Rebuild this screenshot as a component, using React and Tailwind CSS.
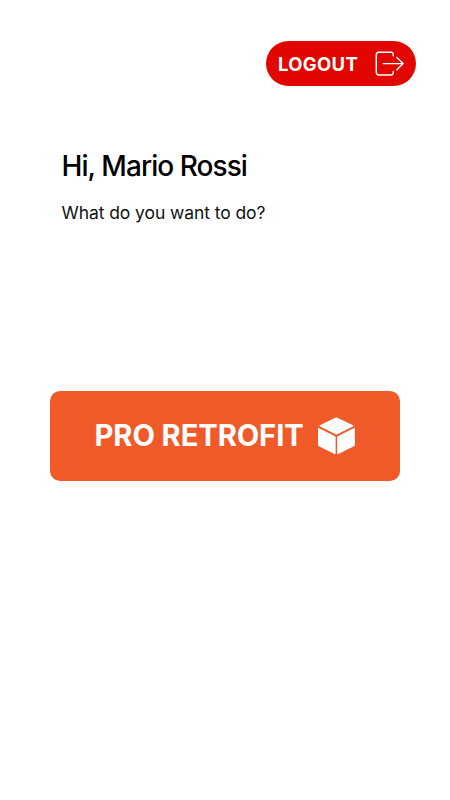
function LogoutIcon() {
  return (
    <svg className="h-[26px] w-[30px] shrink-0" viewBox="0 0 30 26" fill="none" stroke="#fff" strokeWidth="1.45" strokeLinecap="round" strokeLinejoin="round">
      <path d="M18.2 4.8V3.1Q18.2 1.2 16 1.2H4Q1.3 1.2 1.3 3.8V21Q1.3 23.9 4 23.9H16Q18.2 23.9 18.2 21.8V20.4" />
      <path d="M8.2 12.6H28.2M21.8 6.4L28.2 12.6L21.8 18.8" />
    </svg>
  );
}

function BoxIcon() {
  return (
    <svg className="h-[38px] w-[38px] shrink-0" viewBox="0 0 38 38" fill="#fff" stroke="#fff" strokeWidth="1" strokeLinejoin="round">
      <path d="M19.4 0.8L36.2 8.8L19.4 17.2L2.8 8.8Z" />
      <path d="M1.5 11.4L18.1 19.8V36.8L1.5 28.6Z" />
      <path d="M37.3 11.4L20.7 19.8V36.8L37.3 28.6Z" />
    </svg>
  );
}

export default function App() {
  return (
    <main className="flex h-[800px] w-[450px] flex-col overflow-hidden bg-white font-['Inter',sans-serif] text-black">
      <header className="flex justify-end pt-[41px] pr-[34px]">
        <button className="flex h-[45px] w-[150px] items-center rounded-full bg-[#e10600] pl-[12px] text-white">
          <span className="w-[97px] shrink-0 pt-[3px] text-left text-[18.4px] font-bold tracking-[0.4px] whitespace-nowrap">LOGOUT</span>
          <LogoutIcon />
        </button>
      </header>
      <section className="mt-[62px] h-[80px] pl-[61.5px]">
        <h1 className="text-[28px] leading-[36px] font-medium tracking-[-0.94px] whitespace-nowrap">Hi, Mario Rossi</h1>
        <p className="mt-[17px] text-[17.5px] leading-[24px] tracking-[-0.08px] whitespace-nowrap text-[#111]">What do you want to do?</p>
      </section>
      <button className="mt-[163px] ml-[50px] flex h-[90px] w-[350px] shrink-0 items-center rounded-[10px] bg-[#ef5a28] pl-[44.5px] text-white">
        <span className="w-[222.5px] shrink-0 text-left text-[29.2px] leading-[40px] font-bold tracking-[-0.1px] whitespace-nowrap">PRO RETROFIT</span>
        <BoxIcon />
      </button>
    </main>
  );
}
